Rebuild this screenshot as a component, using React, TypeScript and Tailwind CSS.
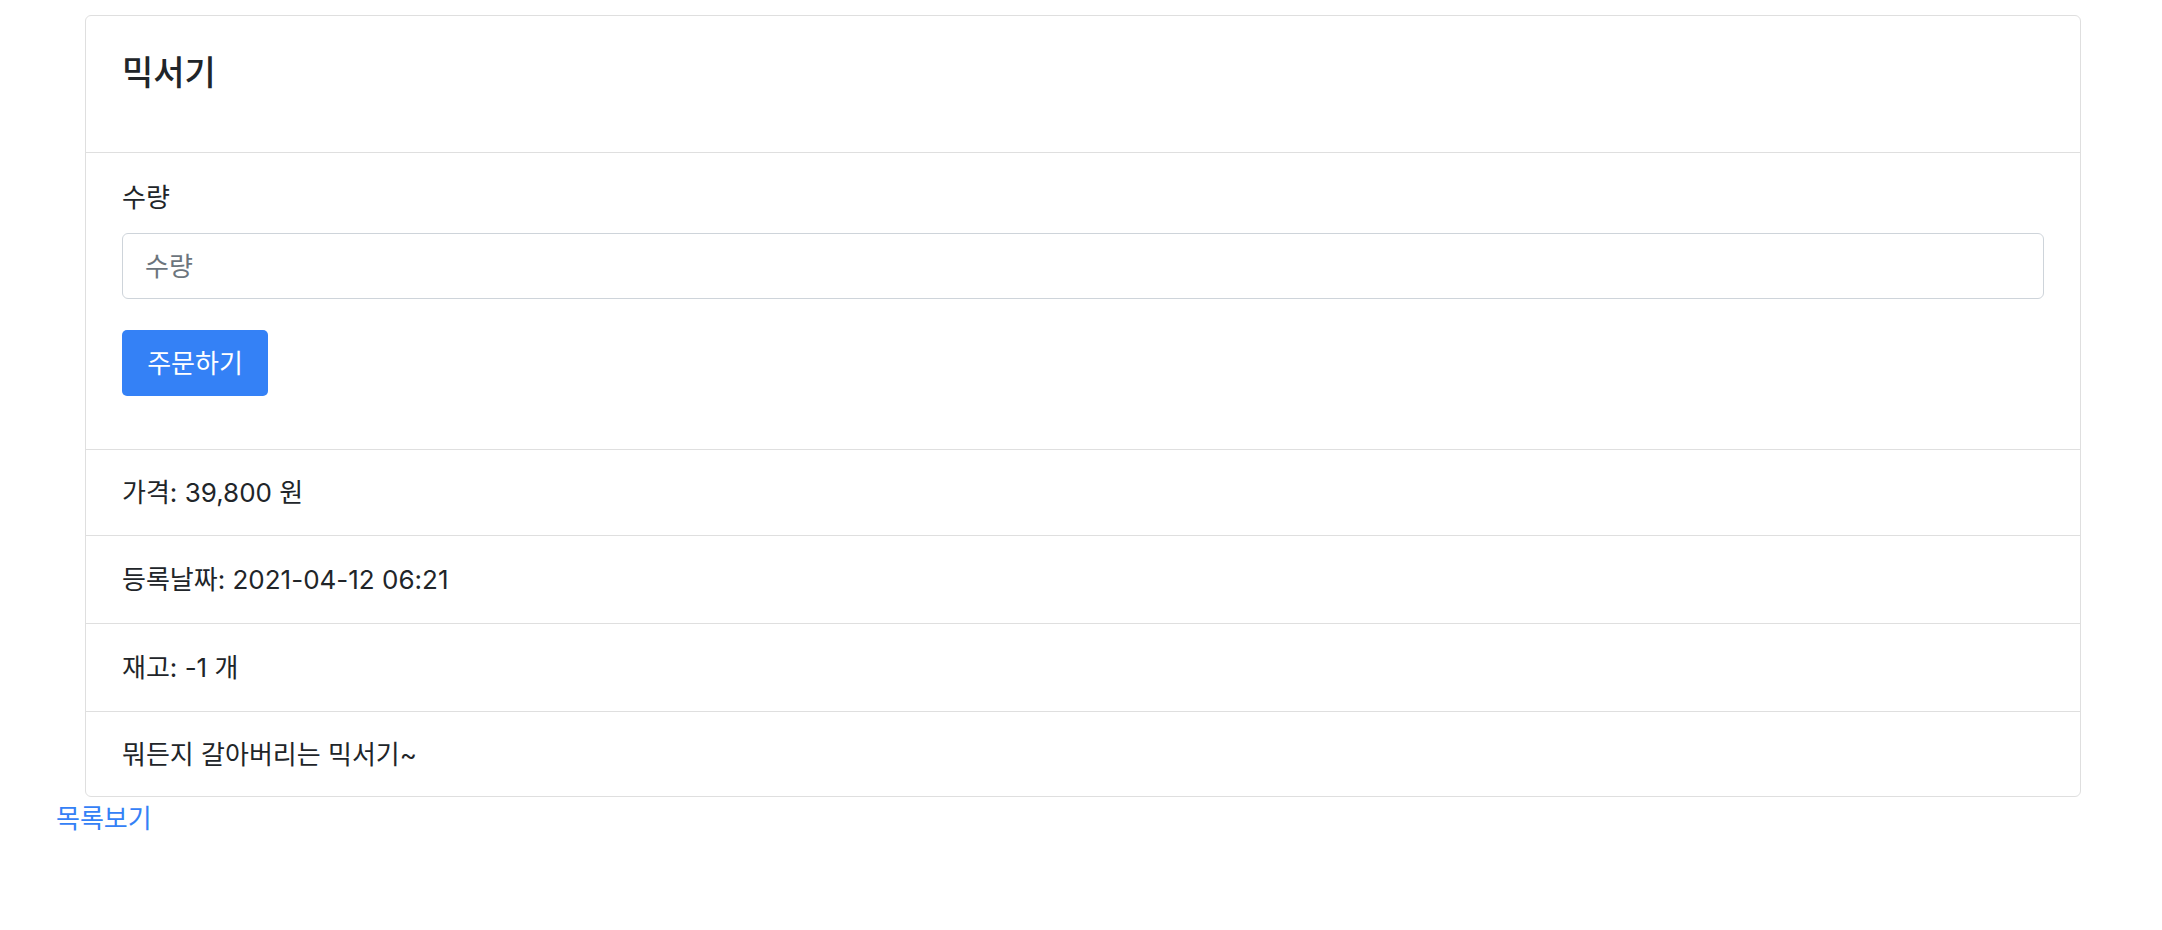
const font = { fontFamily: 'Inter, "Noto Sans CJK KR", sans-serif' };

const rows = [
  { text: "가격: 39,800 원", h: "h-[86px] border-b" },
  { text: "등록날짜: 2021-04-12 06:21", h: "h-[88px] border-b" },
  { text: "재고: -1 개", h: "h-[88px] border-b" },
  { text: "뭐든지 갈아버리는 믹서기~", h: "h-[84px]" },
];

export default function App() {
  return (
    <div className="min-h-[930px] bg-white pt-[15px] text-[#212529]" style={font}>
      <div className="ml-[85px] w-[1996px] overflow-hidden rounded-[6px] border border-[#dfdfdf]">
        <div className="h-[137px] border-b border-[#dfdfdf] px-[36px] pt-[36px]">
          <h4 className="text-[34px] leading-[42px] font-medium">믹서기</h4>
        </div>

        <div className="h-[297px] border-b border-[#dfdfdf] px-[36px] pt-[28px]">
          <label className="block text-[26px] leading-[33px]">수량</label>
          <input
            type="text"
            placeholder="수량"
            className="mt-[19px] block h-[66px] w-full rounded-[6px] border border-[#ced4da] px-[22px] text-[26px] outline-none placeholder:text-[#6c757d]"
          />
          <button
            type="button"
            className="mt-[31px] h-[66px] w-[146px] rounded-[5px] bg-[#3481f6] text-[26px] text-white"
          >
            주문하기
          </button>
        </div>

        {rows.map((r) => (
          <div
            key={r.text}
            className={`flex items-center border-[#dfdfdf] px-[36px] text-[26px] ${r.h}`}
          >
            {r.text}
          </div>
        ))}
      </div>
      <a href="#" className="mt-[4px] ml-[56px] block w-fit text-[26px] leading-[36px] text-[#3481f6]">
        목록보기
      </a>
    </div>
  );
}
